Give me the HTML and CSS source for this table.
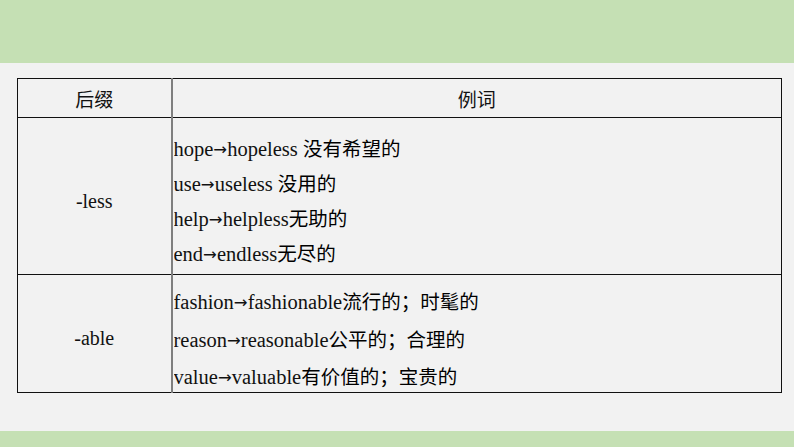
FILE: index.html
```html
<!DOCTYPE html>
<html lang="zh">
<head>
<meta charset="utf-8">
<link rel="stylesheet" href="styles.css">
</head>
<body>
<div class="page">
  <div class="top-band"></div>
  <div class="content">
    <table class="suffix-table">
      <colgroup><col class="c1"><col class="c2"></colgroup>
      <tr class="head">
        <td class="cell-center">后缀</td>
        <td class="cell-center">例词</td>
      </tr>
      <tr>
        <td class="cell-center en">-less</td>
        <td class="words">
          <div class="lines l1">
            <div class="line">hope<span class="arrow">→</span>hopeless <span class="zh">没有希望的</span></div>
            <div class="line">use<span class="arrow">→</span>useless <span class="zh">没用的</span></div>
            <div class="line">help<span class="arrow">→</span>helpless<span class="zh">无助的</span></div>
            <div class="line">end<span class="arrow">→</span>endless<span class="zh">无尽的</span></div>
          </div>
        </td>
      </tr>
      <tr>
        <td class="cell-center en">-able</td>
        <td class="words">
          <div class="lines l2">
            <div class="line">fashion<span class="arrow">→</span>fashionable<span class="zh">流行的；时髦的</span></div>
            <div class="line">reason<span class="arrow">→</span>reasonable<span class="zh">公平的；合理的</span></div>
            <div class="line">value<span class="arrow">→</span>valuable<span class="zh">有价值的；宝贵的</span></div>
          </div>
        </td>
      </tr>
    </table>
  </div>
  <div class="bottom-band"></div>
</div>
</body>
</html>
```
FILE: styles.css
```css
html, body {
  margin: 0;
  padding: 0;
}
body {
  width: 794px;
  height: 447px;
  overflow: hidden;
  background: #f2f2f2;
  font-family: "Liberation Serif", "Noto Sans CJK SC", serif;
}
.page {
  display: flex;
  flex-direction: column;
  height: 447px;
}
.top-band {
  height: 63px;
  background: #c5e0b4;
}
.content {
  flex: 1;
  padding: 15px 12px 0 17px;
}
.bottom-band {
  height: 16px;
  background: #c5e0b4;
}
.suffix-table {
  width: 765px;
  border-collapse: collapse;
  border: 1.5px solid #111;
}
.c1 { width: 154px; }
.suffix-table td {
  border-top: 1px solid #111;
  border-bottom: 1px solid #111;
  padding: 0;
  color: #111;
}
.suffix-table td:first-child {
  border-right: 2px solid #7f7f7f;
}
.head td {
  height: 38px;
  font-family: "Noto Sans CJK SC", sans-serif;
  font-size: 19px;
}
.cell-center {
  text-align: center;
  vertical-align: middle;
}
.en {
  font-size: 20px;
  padding-top: 10px !important;
}
.words {
  font-size: 20.5px;
  padding-left: 1px !important;
  vertical-align: top;
}
.lines {
  box-sizing: border-box;
  overflow: hidden;
}
.l1 {
  height: 156px;
  padding-top: 12px;
}
.l1 .line { height: 35px; line-height: 35px; }
.l2 {
  height: 117px;
  padding-top: 7px;
}
.l2 .line { height: 37.5px; line-height: 37.5px; }
.line { white-space: nowrap; }
.zh {
  font-family: "Noto Sans CJK SC", sans-serif;
  font-size: 19.5px;
  color: #000;
}
.arrow {
  font-family: "DejaVu Sans", sans-serif;
  font-size: 16.5px;
  position: relative;
  top: -1px;
}
```
